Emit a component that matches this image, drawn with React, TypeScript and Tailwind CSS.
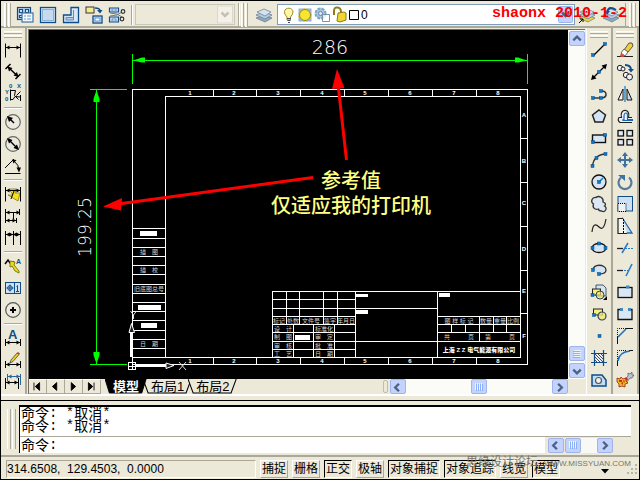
import React from 'react';

const BLUE = '#0f4c8a';
const NODE = '#0878d0';

type Tool = { name: string; art: React.ReactNode };

const Node = ({ x, y }: { x: number; y: number }) => (
  <rect x={x - 1.5} y={y - 1.5} width="3" height="3" fill={NODE} stroke="#064a86" strokeWidth="0.5" />
);

// Horizontal dimension line with arrow heads at both ends
const DimLine = ({ y, x1 = 1, x2 = 15, color = '#000' }: { y: number; x1?: number; x2?: number; color?: string }) => (
  <g fill={color} stroke={color}>
    <path d={`M${x1} ${y}H${x2}`} />
    <path d={`M${x1} ${y}l3.5 -2v4zM${x2} ${y}l-3.5 -2v4z`} stroke="none" />
  </g>
);

const dimensionTools: Tool[][] = [
  [
    { name: '线性标注', art: <><path d="M.5 1.500v14M15.500 1.500v14" stroke="#000" /><DimLine y={5.5} /></> },
    {
      name: '对齐标注',
      art: (
        <g stroke="#000" fill="#000">
          <path d="M3 3l10 9.500M.5 5l5-5M10.500 15l5-5" strokeWidth="1.500" />
          <path d="M2.500 2.500l5 1.500-3.500 3.500zM13.500 13l-5-1.500L12 8z" stroke="none" />
        </g>
      ),
    },
    {
      name: '坐标标注',
      art: (
        <g stroke="#000" fill="none">
          <path d="M5.500 3.500v11M5.500 4.500h5l-1 5 4 4M5 13.500h3l2-3 5 .5M11.500 9.500l4-4M15.500 9v6" />
          <g fill={BLUE} stroke="none" fontSize="6" fontWeight="700" fontFamily="Liberation Sans, sans-serif">
            <text x="4" y="2">0</text><text x="12" y="2">X</text><text x="0" y="8">Y</text><text x="0" y="15">0</text>
          </g>
        </g>
      ),
    },
  ],
  [
    {
      name: '半径标注',
      art: <><circle cx="8" cy="8" r="7.3" fill="#eceadf" stroke="#666" strokeWidth="1.200" /><path d="M9 9L4 4" stroke="#000" strokeWidth="1.500" /><path d="M2 2l6 2-4 4z" /></>,
    },
    {
      name: '直径标注',
      art: <><circle cx="8" cy="8" r="7.3" fill="#eceadf" stroke="#666" strokeWidth="1.200" /><path d="M4 4l8 8" stroke="#000" strokeWidth="1.500" /><path d="M2 2l5.500 2-3.500 3.500zM14 14l-5.500-2L12 8.500z" /></>,
    },
    {
      name: '角度标注',
      art: <><path d="M0 15.500h15.500M0 10L9 1" stroke="#000" /><path d="M9 3q5 4 5 9" stroke="#000" fill="none" /><path d="M7 1.500l4.500 .5-3 3.500zM14 14.500l-2.500-5h4.500z" /></>,
    },
  ],
  [
    {
      name: '快速标注',
      art: <><path d="M4 3h7l-1 4h5l-2 8-10-6h5z" fill="#f6df1c" stroke="#7a6d00" strokeWidth="0.700" /><path d="M.5 1v14.500M15.500 1v14.500M9 5l-3 8" stroke="#000" /><DimLine y={4.5} /></>,
    },
    {
      name: '基线标注',
      art: <><path d="M.5 1v14M11.500 10v5M14.500 1v6" stroke="#000" /><DimLine y={4.5} x2={15} /><DimLine y={12.5} x2={11} /><path d="M8.500 4v7" stroke="#000" /></>,
    },
    {
      name: '连续标注',
      art: <><path d="M.5 1v14M8.500 1v14M15.500 1v14" stroke="#000" /><DimLine y={4.5} x2={8} /><DimLine y={4.5} x1={8} /></>,
    },
  ],
  [
    {
      name: '快速引线',
      art: <><path d="M0 6l3-4 2 3 4-1" stroke="#000" strokeWidth="1.500" fill="none" /><path d="M5 3l5 1-1 3 5 6v2l-4-2-3-5-2 1z" fill="#e8dc20" stroke="#6b6200" strokeWidth="0.800" /><text x="11" y="6" fontSize="7" fontWeight="700" fill={BLUE} fontFamily="Liberation Sans, sans-serif">A</text></>,
    },
    {
      name: '公差',
      art: <><rect x=".5" y="2.500" width="15" height="11" fill="#d3e1f1" stroke={BLUE} /><path d="M9.500 3v10" stroke={BLUE} /><circle cx="5" cy="8" r="2.300" fill="none" stroke={BLUE} /><path d="M1.500 8h7M5 4.500v7M11.500 6.500l1-1v6M11 11.500h3" stroke={BLUE} fill="none" /></>,
    },
    {
      name: '圆心标记',
      art: <><circle cx="8" cy="8" r="7.3" fill="#eceadf" stroke="#555" strokeWidth="1.200" /><path d="M8 5v6M5 8h6" stroke="#000" strokeWidth="2" /></>,
    },
  ],
  [
    {
      name: '编辑标注',
      art: <><text x="3" y="9" fontSize="13" fontWeight="700" fill={BLUE} fontFamily="Liberation Sans, sans-serif">A</text><path d="M.5 9v7M15.500 9v7" stroke="#000" /><DimLine y={12.5} /></>,
    },
    {
      name: '编辑标注文字',
      art: <><path d="M.5 9v7M15.500 9v7" stroke="#000" /><DimLine y={12.5} /><path d="M5 11l1-3 6-7 2 1.500-6 7z" fill="#e8cf2a" stroke="#333" strokeWidth="0.700" /><path d="M12 1l1-1 2 1.500-1 1z" fill="#d03030" /></>,
    },
    {
      name: '标注更新',
      art: <><path d="M2.500 0v7M15.500 0v11" stroke="#2c6496" /><DimLine y={2.5} x1={3} color="#2c6496" /><path d="M.5 4v11M13.500 4v11" stroke="#000" /><DimLine y={8.5} x2={13} /></>,
    },
  ],
];

const drawTools: Tool[] = [
  { name: '直线', art: <><path d="M2 14L14 2" stroke="#000" strokeWidth="1.200" /><Node x={2} y={13} /><Node x={14} y={2} /></> },
  { name: '构造线', art: <><path d="M2 14L14 2" stroke="#000" strokeWidth="1.200" /><path d="M0 16l1.500-5.500 4 4zM16 0l-5.500 1.500 4 4z" /><Node x={8} y={8} /></> },
  { name: '多段线', art: <><path d="M2 12h9c6-1 5-8-1-7" stroke="#333" strokeWidth="1.500" fill="none" /><Node x={2} y={12} /><Node x={10} y={12} /><Node x={10} y={5} /></> },
  { name: '正多边形', art: <path d="M8 2l6.500 5-2.500 7H4L1.500 7z" fill="#d5e4f4" stroke="#222" strokeWidth="1.500" /> },
  { name: '矩形', art: <><rect x="1.500" y="5" width="13" height="7.500" fill="#d9e6f4" stroke="#111" strokeWidth="1.400" /><Node x={2} y={12} /><Node x={14} y={5} /></> },
  { name: '圆弧', art: <><path d="M1.500 14C2 8 6 2 15 2" stroke="#333" strokeWidth="1.300" fill="none" /><Node x={1.5} y={14} /><Node x={5.5} y={6} /><Node x={14.5} y={2} /></> },
  { name: '圆', art: <><circle cx="8" cy="8" r="7" fill="#d7e4f4" stroke="#111" strokeWidth="1.300" /><path d="M8 8l4-4" stroke={NODE} strokeWidth="1.500" /><Node x={8} y={8} /></> },
  { name: '修订云线', art: <path d="M2.500 8C-1 6 1 1 5 1.500 8-1 13 2 12 6c3 1 3 3 1.500 4C17 12 14 17 10.500 15c-2 0-3-1-3-2C4 14 1 12 2.500 8z" fill="#dce7f4" stroke="#333" strokeWidth="1.300" /> },
  { name: '样条曲线', art: <path d="M1 14C2 5 5 6 8 9c4 4 6-2 7-8" stroke="#222" strokeWidth="1.200" fill="none" /> },
  { name: '椭圆', art: <><ellipse cx="8" cy="8" rx="7" ry="4.500" fill="#d5e4f4" stroke="#111" strokeWidth="1.300" /><Node x={1.5} y={8} /><Node x={14.5} y={8} /><Node x={8} y={3.5} /></> },
  { name: '椭圆弧', art: <><path d="M2 9C1 1 15 2 15 8c0 3-3 4-7 4" fill="#d5e4f4" stroke="#333" strokeWidth="1.300" /><Node x={2} y={8} /><Node x={8} y={12} /></> },
  {
    name: '插入块',
    art: <><path d="M5 1h7l3 3v8H5z" fill="#d5e4f4" stroke="#234" strokeWidth=".8" /><rect x="1.500" y="5" width="8" height="6" fill="#f5ed85" stroke="#222" /><circle cx="9" cy="11" r="4" fill="#f0e675" fillOpacity=".7" stroke="#345" /><Node x={1.5} y={11} /><path d="M16 12v4h-4z" /></>,
  },
  { name: '创建块', art: <><rect x="2.500" y="3" width="9" height="6" fill="#f5ed85" stroke="#222" /><circle cx="11" cy="10" r="4" fill="#f0e675" fillOpacity=".8" stroke="#345" strokeWidth="1.200" /><Node x={3} y={9} /></> },
  { name: '点', art: <Node x={8.5} y={8} /> },
  { name: '图案填充', art: <><rect x="3.500" y="3.500" width="9" height="9" fill="#e8eff8" /><path d="M4 4l8 8M7 4l5 5M10 4l2 2M4 7l5 5M4 10l2 2" stroke="#222" strokeWidth=".8" /><path d="M3.500 0v16M12.500 0v16M0 3.500h16M0 12.500h16" stroke={BLUE} strokeWidth="1.200" /></> },
  { name: '面域', art: <><path d="M1 3h10l4 5v6H1z" fill="#c5dcf1" stroke={BLUE} strokeWidth="1.500" /><circle cx="7.500" cy="8.500" r="3" fill="#edf3fa" stroke="#555" strokeWidth="1.200" /></> },
];

const modifyTools: Tool[] = [
  { name: '删除', art: <><path d="M0 14.500h16" stroke="#222" /><path d="M7 8l5-7h3l1 3-5 6z" fill="#f1cf36" stroke="#333" strokeWidth=".8" /><path d="M4 11l3-4 4 3-3 4z" fill="#fff" stroke="#445" strokeWidth=".8" /><path d="M4 11l4 3q-3 2-5 0z" fill="#d64c3a" /></> },
  { name: '复制', art: <><path d="M8 1q6 0 6 5" stroke={BLUE} strokeWidth="2" fill="none" /><path d="M11 5h6l-3 3.500z" fill={BLUE} /><g fill="#eef2f8" stroke="#222"><circle cx="3" cy="4" r="2.700" /><circle cx="6" cy="5" r="2" /><circle cx="9" cy="11" r="2.700" /><circle cx="12.500" cy="13" r="3" /></g></> },
  { name: '镜像', art: <><path d="M6 3v11H1z" fill="#f6f6f2" stroke="#111" /><path d="M10 3v11h5z" fill="#c9dcee" stroke="#111" /><path d="M8 0v16" stroke={NODE} strokeWidth="1.200" /></> },
  { name: '偏移', art: <><path d="M15 14.500H3q-3-2-1-5h2.500C2 0 14 0 11.500 9.500H15" fill="#edf3fa" stroke="#222" strokeWidth="1.200" /><path d="M16 12.500H6q-1-1 1-1V8c0-4 4-4 3.500 0v3.500H16" fill="none" stroke="#1b67b5" strokeWidth="1.200" /></> },
  { name: '阵列', art: <g fill="#e1ebf5" stroke="#111" strokeWidth="1.300"><rect x="1" y=".5" width="5.500" height="5.500" /><rect x="10" y=".5" width="5.500" height="5.500" /><rect x="1" y="9.500" width="5.500" height="5.500" /><rect x="10" y="9.500" width="5.500" height="5.500" /></g> },
  { name: '移动', art: <><path d="M8 2v12M2 8h12" stroke="#41719c" strokeWidth="2" /><path d="M8 0l3 4H5zM8 16l3-4H5zM0 8l4-3v6zM16 8l-4-3v6z" fill="#41719c" /></> },
  { name: '旋转', art: <><path d="M4 3.500a6.500 6.500 0 1 0 8 0" fill="none" stroke="#557a9c" strokeWidth="2.200" /><path d="M1 1h7v6z" fill="#41719c" /></> },
  { name: '缩放', art: <><rect x="1" y=".5" width="14.500" height="14.500" fill="#cfe0f2" stroke={BLUE} /><rect x="1" y="7.500" width="8" height="8" fill="#edf2f7" stroke="#000" strokeDasharray="1 1" /></> },
  { name: '拉伸', art: <><path d="M6 1l9 14H6z" fill="#c9dcee" stroke="#2467a8" strokeWidth="1.300" /><path d="M6 .5H1v15h9" fill="#f4f4ee" stroke="#222" strokeWidth="1.200" /><path d="M6.500 1v14" stroke="#000" strokeDasharray="2 1" /></> },
  { name: '修剪', art: <><path d="M0 8.500h6" stroke="#222" strokeWidth="1.300" /><path d="M5 13l6-10" stroke="#2479cc" strokeWidth="1.500" /><path d="M8 8.500h8" stroke="#2479cc" strokeDasharray="2 1" /></> },
  { name: '延伸', art: <><path d="M0 8.500h6" stroke="#222" strokeWidth="1.300" /><path d="M7 8.500h4" stroke="#2479cc" strokeDasharray="2 1" /><path d="M9 14l6-12" stroke="#2479cc" strokeWidth="1.500" /></> },
  { name: '打断于点', art: <><rect x="1" y="3.500" width="14" height="10" fill="#d9e6f3" stroke="#111" strokeWidth="1.300" /><rect x="9" y="1.500" width="3.500" height="3" fill="#4688c4" /></> },
  { name: '打断', art: <><path d="M4 3.500H1v10h14v-10h-3" fill="#d9e6f3" stroke="#111" strokeWidth="1.300" /><rect x="3" y="2" width="3" height="3" fill="#4688c4" /><rect x="11" y="2" width="3" height="3" fill="#4688c4" /></> },
  { name: '倒角', art: <><path d="M.5 9V.5h9" fill="none" stroke="#111" strokeDasharray="1 1" /><path d="M.5 16V9M9 .5h7" stroke="#111" /><path d="M1 9l8-8" stroke="#1c6fc4" strokeWidth="1.600" /></> },
  { name: '圆角', art: <><path d="M.5 9V.5h9" fill="none" stroke="#111" strokeDasharray="1 1" /><path d="M.5 16v-6M12 .5h4" stroke="#111" /><path d="M1 11Q2 2 13 1" fill="none" stroke="#1c6fc4" strokeWidth="1.600" /></> },
  { name: '分解', art: <><path d="M7 9l4-5 0-3 2 1 2-2 0 3 2 0-2 3-2 0-4 5z" fill="#b9c8d8" stroke="#555" strokeWidth=".7" /><path d="M0 6l3 1 1-2 2 2 3-1 0 3 2 2-3 1 0 3-3-1-3 1 0-3-2-2z" fill="#e9bc1d" stroke="#9c2010" strokeWidth=".8" /><path d="M2 8h3v2H2zM6 8l2 1-1 2zM4 11l2-1v3zM9 5l2 2-1 2-2-2z" fill="#d4281c" /></> },
];

const ToolButton = ({ tool }: { tool: Tool }) => (
  <button type="button" aria-label={tool.name} className="flex h-[22px] w-6 shrink-0 items-center justify-center">
    <svg width="16" height="16" viewBox="0 0 16 16" fill="#000" className="overflow-visible">
      {tool.art}
    </svg>
  </button>
);

const Gripper = ({ vertical = false }: { vertical?: boolean }) => (
  <div className={vertical ? 'flex h-6 shrink-0 gap-px' : 'mx-[3px] flex shrink-0 flex-col gap-px'}>
    {[0, 1].map((i) => (
      <div
        key={i}
        className={
          vertical
            ? 'w-[3px] border-r border-l border-r-[#aca899] border-l-white bg-[#f5f3ea]'
            : 'h-[3px] border-t border-b border-t-white border-b-[#aca899] bg-[#f5f3ea]'
        }
      />
    ))}
  </div>
);

const SideToolbar = ({ groups, label }: { groups: Tool[][]; label: string }) => (
  <div role="toolbar" aria-label={label} className="flex w-[26px] shrink-0 flex-col border-r-2 border-[#aca899] pt-[3px]">
    <Gripper />
    <div className="h-px shrink-0" />
    {groups.map((group, i) => (
      <React.Fragment key={i}>
        {i > 0 && (
          <div className="flex h-1.5 shrink-0 items-center px-[3px]">
            <div className="h-0.5 w-full border-t border-[#aca899] bg-white" />
          </div>
        )}
        {group.map((tool) => <ToolButton key={tool.name} tool={tool} />)}
      </React.Fragment>
    ))}
  </div>
);

const arrows = {
  up: 'M4 9l4-4 4 4',
  down: 'M4 6l4 4 4-4',
  left: 'M9 4L5 8l4 4',
  right: 'M6 4l4 4-4 4',
};

const ScrollButton = ({ dir, label }: { dir: keyof typeof arrows; label: string }) => (
  <button
    type="button"
    aria-label={label}
    className="flex h-[15px] w-4 shrink-0 items-center justify-center rounded-xs border border-[#9db5ea] bg-[#c3d3fd]"
  >
    <svg width="14" height="14" viewBox="1 0 14 15" fill="none" stroke="#4d6185" strokeWidth="2.500">
      <path d={arrows[dir]} />
    </svg>
  </button>
);

const Thumb = ({ vertical = false }: { vertical?: boolean }) => (
  <button
    type="button"
    aria-label="滚动滑块"
    className="flex h-[15px] w-4 shrink-0 items-center justify-center rounded-xs border border-[#9db5ea] bg-[#c3d3fd]"
  >
    <svg width="8" height="8" viewBox="0 0 8 8" className={vertical ? 'rotate-90' : ''} shapeRendering="crispEdges">
      <path d="M.5 0v7M2.500 0v7M4.500 0v7M6.500 0v7" stroke="#eef4fe" />
      <path d="M1.500 1v7M3.500 1v7M5.500 1v7M7.500 1v7" stroke="#8cb0f8" />
    </svg>
  </button>
);

// Stack of three sheets, used by every layer button
const LayerStack = ({ bottom = '#8fa9bf' }: { bottom?: string }) => (
  <g stroke="#5d7893" strokeWidth=".7">
    <path d="M0 11l8-3 8 3-7 4z" fill={bottom} />
    <path d="M0 8l8-3 8 3-7 4z" fill="#b7cbdc" />
    <path d="M1 5l7-3 7 3-6 4z" fill="#d6e3ee" />
  </g>
);

const viewportTools: Tool[] = [
  {
    name: '显示视口对话框',
    art: <g stroke={BLUE} strokeWidth="1.200"><rect x=".5" y=".5" width="13" height="12" fill="#bcd3ea" /><path d="M2.500 2.500h3v3h-3zM8.500 2.500h3v3h-3zM2.500 8.500h3v2h-3z" fill="#e8f0f8" /><rect x="5" y="6" width="11" height="9" fill="#f4f8fc" stroke="#3b76ae" /><path d="M7 9h2M10 9h4M7 12h2M10 12h4" stroke="#6c9bc8" /></g>,
  },
  { name: '单个视口', art: <><rect x=".5" y=".5" width="15" height="15" fill="#d9e6f4" stroke={BLUE} strokeWidth="1.300" /><rect x="2.500" y="2.500" width="11" height="11" fill="#c6dbf0" stroke="#8db2d6" /></> },
  { name: '多边形视口', art: <><path d="M8 .5h7.500v15H.5V8H8z" fill="#d9e6f4" stroke={BLUE} strokeWidth="1.300" /><path d="M10.500 3v10H3v-2.500h7.500z" fill="#afcbe8" stroke="#5b8fc2" /></> },
  { name: '将对象转换为视口', art: <><rect x="0" y="0" width="8" height="6" fill="#f6ec8c" stroke="#334" /><path d="M9 1q5 0 5 3" stroke={BLUE} strokeWidth="1.500" fill="none" /><path d="M11 3h5.500l-2.500 3.500z" fill={BLUE} /><rect x="7" y="9" width="9" height="7" fill="#d9e6f4" stroke={BLUE} strokeWidth="1.300" /><rect x="9" y="11" width="5" height="3" fill="#fff" stroke="#5b8fc2" /></> },
  { name: '裁剪现有视口', art: <><path d="M.5 1h9v4h-9zM.5 10h9v5h-9z" fill="#d0e1f2" stroke={BLUE} strokeWidth="1.200" /><path d="M3 12h4v2H3zM3 2h4v2H3z" fill="#fff" stroke="#5b8fc2" /><path d="M1 6l7 1 5 3M1 9l7-1 5-3" stroke="#777" fill="none" /><circle cx="14" cy="4.500" r="1.800" fill="none" stroke="#333" strokeWidth="1.200" /><circle cx="13" cy="12" r="1.800" fill="none" stroke="#333" strokeWidth="1.200" /></> },
];

const TopBar = () => (
  <header className="relative flex h-[27px] shrink-0 items-center border-b-2 border-[#aca899] pt-0.5 pl-[3px]">
    <Gripper vertical />
    <div className="flex -space-x-px px-0.5">
      {viewportTools.map((tool) => <ToolButton key={tool.name} tool={tool} />)}
    </div>
    <div className="mr-0.5 h-5 w-0.5 border-l border-[#aca899] bg-white" />
    <div className="relative flex h-[21px] w-[100px] border border-[#c9c7ba] bg-[#ece9d8]">
      <select aria-label="视口比例" disabled className="w-full appearance-none" />
      <svg viewBox="0 0 16 18" className="pointer-events-none absolute right-px h-[19px] w-4 bg-[#f3f1e8]">
        <rect x=".5" y=".5" width="15" height="17" fill="none" stroke="#dbd8cb" />
        <path d="M4.500 7L8 10.500 11.500 7" fill="none" stroke="#c5c2b4" strokeWidth="2.500" />
      </svg>
    </div>
    <div className="mr-px ml-[3px] h-full w-0.5 border-l border-[#aca899] bg-white" />
    <Gripper vertical />
    <div className="w-1" />
    <ToolButton tool={{ name: '图层特性管理器', art: <LayerStack /> }} />
    <div className="relative ml-px flex h-[21px] flex-1 items-center border border-[#7f9db9] bg-white">
      <select aria-label="图层" className="h-full w-full appearance-none bg-white pl-[83px] font-['Liberation_Sans',sans-serif] text-xs leading-none">
        <option>0</option>
      </select>
      <svg width="80" height="18" viewBox="0 0 80 18" className="pointer-events-none absolute left-0.5">
        <path d="M7 11Q4 8 4.500 5.500C5 1 13 1 13 6q0 2-2.500 5v3H7z" fill="#fff9a5" stroke="#a08b2a" />
        <path d="M7 12.500h4M7.500 14.500h3M8 16.500h2" stroke="#445" />
        <path d="M18.500 2.500h13v13h-13z" fill="#8ab1ec" />
        <circle cx="25" cy="9" r="5.500" fill="#f8e52d" stroke="#a28a16" />
        <circle cx="25" cy="9" r="6.500" fill="none" stroke="#e5ca27" strokeDasharray="1.500 2" />
        <circle cx="40.500" cy="7.500" r="5" fill="#a9c6df" stroke="#7fa3c2" strokeWidth="2" strokeDasharray="3 1" />
        <circle cx="40.500" cy="7.500" r="2" fill="#dce9f3" stroke="#6089ad" />
        <path d="M42.500 8.500h7v7h-7z" fill="#fff" fillOpacity=".7" stroke="#7892aa" />
        <path d="M54 9V5q0-4 3.500-3.500Q61 2 61 6v3" fill="none" stroke="#8f7c18" strokeWidth="2" />
        <path d="M58 7l6-1 2 1v7l-6 2-3-1z" fill="#f0d62d" stroke="#8f7c18" />
        <path d="M69.500 4.500h9v9h-9z" fill="#fff" stroke="#000" />
      </svg>
      <svg width="15" height="17" viewBox="0 0 15 17" className="pointer-events-none absolute right-px">
        <rect x=".5" y=".5" width="14" height="16" rx="1" fill="#c3d3fd" stroke="#9db5ea" />
        <path d="M4 6.500l3.500 3.500L11 6.500" fill="none" stroke="#4d6185" strokeWidth="2.500" />
      </svg>
    </div>
    <div className="flex w-[50px]">
      <ToolButton tool={{ name: '将对象的图层置为当前', art: <><LayerStack bottom="#f1d72f" /><path d="M0 16l4-4M1 12h3v3" stroke="#000" fill="none" /></> }} />
      <ToolButton tool={{ name: '上一个图层', art: <><LayerStack /><path d="M13 3Q6-2 4 5" fill="none" stroke={BLUE} strokeWidth="2" /><path d="M1 4h6L4 8z" fill={BLUE} /></> }} />
    </div>
    <div className="mr-[3px] h-full w-px bg-[#aca899]" />
    <Gripper vertical />
    <div className="w-[3px]" />
    <p className="absolute top-1 right-3 font-['Liberation_Mono',monospace] text-[15px] leading-[18px] font-bold whitespace-pre text-[#f80000]">
      shaonx 2010-1-2
    </p>
  </header>
);

const columnMarks = [213, 256, 300, 344, 388, 432, 476];
const columnLabels = [190, 234, 278, 322, 365, 410, 454, 498];
const rowMarks = [138, 182, 226, 270, 313];
const rowLabels: [string, number][] = [['A', 115], ['B', 161], ['C', 203], ['D', 249], ['E', 291], ['F', 336]];
const stubLines = [228, 238, 247, 256, 265, 274, 284, 293, 302, 311, 320, 330, 339, 348];

// [text, x, baseline] of the title block and of the strip on the left
const sheetTexts: [string, number, number][] = [
  ['描　图', 149, 254], ['描　校', 149, 272], ['旧底图总号', 149, 291], ['日　期', 149, 346],
  ['标记', 279, 323], ['处数', 293, 323], ['文件号', 311, 323], ['签字', 330, 323], ['年月日', 346, 323],
  ['设　计', 283, 331], ['标准化', 324, 331], ['制　图', 283, 339], ['审　定', 324, 339],
  ['审　核', 283, 348], ['批　准', 324, 348], ['工　艺', 283, 356], ['日　期', 324, 356],
  ['图 样 标 记', 459, 323], ['数量', 486, 323], ['重量', 500, 323], ['比例', 513, 323],
  ['共　　　页', 459, 339], ['第　　　页', 500, 339],
];

const Drawing = () => (
  <svg
    viewBox="29 30 539 348"
    role="img"
    aria-label="图纸"
    preserveAspectRatio="xMinYMin meet"
    className="block min-h-0 w-full flex-1 bg-black font-['Liberation_Sans','Noto_Sans_CJK_SC',sans-serif]"
  >
    <g fill="none" stroke="#fff" shapeRendering="crispEdges">
      <path d="M132.500 89.500h395v275h-395zM165.500 357.500v-261h355v261M132.500 357.500h388" />
      {columnMarks.map((x) => <path key={x} d={`M${x + 0.5} 89v8M${x + 0.5} 357v8`} />)}
      {rowMarks.map((y) => <path key={y} d={`M520 ${y + 0.5}h8`} />)}
      {stubLines.map((y) => <path key={y} d={`M132 ${y + 0.5}h33`} />)}
      <path d="M272.500 357v-65.500h248M355.500 291v66M437.500 291v66" />
      <path d="M272 299.500h83M272 308.500h165M272 316.500h83M272 324.500h83M272 332.500h83M272 341.500h248M272 349.500h83" />
      <path d="M286.500 291v33M299.500 291v33M323.500 291v33M337.500 291v33M293.500 324v33M313.500 324v33M334.500 324v33" />
      <path d="M437 316.500h83M437 324.500h83M437 332.500h83M479.500 316v25M493.500 316v16M506.500 316v16M451.500 324v8M465.500 324v8" />
    </g>
    <path
      fill="#fff"
      shapeRendering="crispEdges"
      d="M140 231h17v5h-17zM138 305h23v5h-23zM141 323h16v5h-16zM356 294h12v3h-12zM356 310h12v4h-12zM439 293h11v4h-11zM295 335h15v5h-15z"
    />

    <g fill="#fff" fontSize="6" fontWeight="700" textAnchor="middle">
      {columnLabels.map((x, i) => (
        <React.Fragment key={x}>
          <text x={x} y="95">{i + 1}</text>
          <text x={x} y="363">{i + 1}</text>
        </React.Fragment>
      ))}
      {rowLabels.map(([label, y]) => <text key={label} x="524" y={y + 2}>{label}</text>)}
    </g>
    <g fill="#d4d4d4" fontSize="6" textAnchor="middle" className="whitespace-pre">
      {sheetTexts.map(([text, x, y]) => <text key={`${x}-${y}`} x={x} y={y}>{text}</text>)}
    </g>
    <text x="479" y="352" fill="#fff" fontSize="6" fontWeight="900" textAnchor="middle">上海 Z Z 电气能源有限公司</text>

    {/* dimensions */}
    <g stroke="#0f0" fill="none" shapeRendering="crispEdges">
      <path d="M132.500 54v30M527.500 54v30M132 60.500h395M90 89.500h37M90 364.500h37M96.500 89v275" />
    </g>
    <path fill="#0f0" d="M133 60.500l9-3h3v5h-3zM527 60.500l-9-3h-3v5h3zM96.500 90l-3 9v3h6v-3zM96.500 364l-3-9v-3h6v3z" />
    <g fill="#fff" textAnchor="middle" fontFamily="DejaVu Sans, sans-serif" fontWeight="200">
      <text x="330" y="54" fontSize="19">286</text>
      <text transform="translate(91 227) rotate(-90)" fontSize="17">199.25</text>
    </g>

    {/* UCS icon */}
    <g stroke="#fff" fill="none" shapeRendering="crispEdges">
      <path d="M128.500 362.500h7v7h-7zM128 366h40M132 369v-38" />
      <path d="M131 357v-25M136 365h30" strokeWidth="2" />
    </g>
    <path d="M129 332.500l2.500-9 3 9zM166 363l8 2.500-8 3z" fill="#222" stroke="#fff" />
    <path d="M130.500 311l3 4 3-4M133.500 315v4M179 362l7 8M186 362l-7 8" stroke="#ddd" fill="none" />

    {/* callout */}
    <path d="M313 177.500L118 204M346.500 160L338 84" stroke="#f00" strokeWidth="3" />
    <path d="M103 206.500l19-8.500-1 12.500zM337 69l-5 20 12.500-1z" fill="#f00" />
    <g fill="#ffff80" fontSize="20" fontWeight="500" textAnchor="middle">
      <text x="351" y="188">参考值</text>
      <text x="351" y="213">仅适应我的打印机</text>
    </g>
  </svg>
);

const navButtons = [
  { name: '第一个布局', d: 'M4.500 3v9M11 3v9L6 7.500z' },
  { name: '上一个布局', d: 'M10 3v9L5 7.500z' },
  { name: '下一个布局', d: 'M6 3v9l5-4.500z' },
  { name: '最后一个布局', d: 'M5 3v9l5-4.500zM11.500 3v9' },
];

const LayoutTab = ({ label, active = false }: { label: string; active?: boolean }) => (
  <button
    type="button"
    className={`relative -ml-1 h-[15px] px-2 text-[13px] leading-[14px] first:ml-0 ${active ? 'z-10 font-bold text-white' : 'text-black'}`}
  >
    <svg viewBox="0 0 48 15" preserveAspectRatio="none" className="absolute inset-0 h-full w-full">
      <path d="M0 0l5 14h37l5-14" fill={active ? '#000' : '#ece9d8'} stroke="#000" />
    </svg>
    <span className="relative">{label}</span>
  </button>
);

const LayoutBar = () => (
  <div className="flex h-[15px] shrink-0 items-center">
    {navButtons.map((b) => (
      <button key={b.name} type="button" aria-label={b.name} className="h-[15px] w-[18px] border-t border-r border-b border-[#aca899] border-t-white">
        <svg width="16" height="13" viewBox="0 0 16 15" stroke="#000"><path d={b.d} /></svg>
      </button>
    ))}
    <nav aria-label="布局" className="ml-1 flex">
      <LayoutTab label="模型" active />
      <LayoutTab label="布局1" />
      <LayoutTab label="布局2" />
    </nav>
    <div className="flex-1" />
    <div className="mr-0.5 h-[13px] w-[5px] rounded-xs border border-[#c0bdae]" />
    <div className="flex w-[32%] items-center justify-between bg-[#fbfbf8]">
      <ScrollButton dir="left" label="向左滚动" />
      <Thumb />
      <ScrollButton dir="right" label="向右滚动" />
    </div>
    <div className="w-[17px]" />
  </div>
);

const Prompt = ({ children }: { children?: React.ReactNode }) => (
  <span className="flex h-[13px] items-center whitespace-pre">
    命令<span className="font-['Liberation_Mono',monospace]">: {children && '*'}</span>
    {children}
    {children && <span className="font-['Liberation_Mono',monospace]">*</span>}
  </span>
);

const CommandWindow = () => (
  <section aria-label="命令行" className="flex shrink-0 border-t border-black pt-1 pr-2 pb-0.5 pl-1.5">
    <div className="flex w-3 py-1">
      <div className="flex h-10 gap-px">
        <div className="w-1 border-r border-l border-r-[#aca899] border-l-white" />
        <div className="w-1 border-r border-l border-r-[#aca899] border-l-white" />
      </div>
    </div>
    <div className="flex-1 border-t-2 border-l border-black bg-white text-sm leading-[13px]">
      <div className="flex flex-col border-b border-[#aca899] pb-[3px] pl-px">
        <Prompt>取消</Prompt>
        <Prompt>取消</Prompt>
      </div>
      <div className="flex h-4 items-center pl-px">
        <label htmlFor="command"><Prompt /></label>
        <input id="command" type="text" className="h-full min-w-0 flex-1 pl-1 outline-none" />
        <div className="flex h-full items-center bg-[#ece9d8] pr-[18px] pl-[3px]">
          <ScrollButton dir="left" label="命令行向左滚动" />
          <div className="ml-px flex w-8 bg-[#f8f8f4]"><Thumb /></div>
          <ScrollButton dir="right" label="命令行向右滚动" />
        </div>
      </div>
    </div>
  </section>
);

const modes = [
  { label: '捕捉', on: false },
  { label: '栅格', on: false },
  { label: '正交', on: true },
  { label: '极轴', on: false },
  { label: '对象捕捉', on: true },
  { label: '对象追踪', on: true },
  { label: '线宽', on: false },
  { label: '模型', on: true },
];

const StatusBar = () => (
  <footer className="relative flex h-6 shrink-0 items-center gap-1 border-t-2 border-[#aca899] pt-0.5 pl-[5px]">
    <div className="h-[18px] flex-1 border border-[#aca899] border-r-white border-b-white font-['Liberation_Sans',sans-serif] text-xs leading-[17px] whitespace-pre">
      314.6508,  129.4503,  0.0000
    </div>
    {modes.map((mode) => (
      <button
        key={mode.label}
        type="button"
        aria-pressed={mode.on}
        className={`h-[18px] shrink-0 border px-px text-xs leading-[17px] ${
          mode.on ? 'border-t-black border-r-white border-b-white border-l-black' : 'border-t-white border-r-[#aca899] border-b-[#aca899] border-l-white'
        }`}
      >
        {mode.label}
      </button>
    ))}
    <div className="flex w-[75px] items-end justify-end gap-4">
      <button type="button" aria-label="状态栏菜单" className="pb-0.5">
        <svg width="8" height="5" viewBox="0 0 8 5"><path d="M0 0h8L4 4.500z" /></svg>
      </button>
      <svg width="14" height="14" viewBox="0 0 14 14" fill="#b8b4a2">
        <path d="M10 2h2v2h-2zM6 6h2v2H6zM10 6h2v2h-2zM2 10h2v2H2zM6 10h2v2H6zM10 10h2v2h-2z" />
      </svg>
    </div>
    <p className="absolute -top-0.5 right-2 flex items-center gap-1.5 leading-3 text-[#77756d]">
      <span className="text-xs leading-3">思缘设计论坛</span>
      <span className="pt-1 font-['Liberation_Sans',sans-serif] text-[8px] leading-[10px]">WWW.MISSYUAN.COM</span>
    </p>
  </footer>
);

const App: React.FC = () => (
  <div className="flex min-h-screen flex-col border border-black bg-[#ece9d8] font-['Liberation_Sans','Noto_Sans_CJK_SC',sans-serif] text-black">
    <TopBar />
    <main className="flex flex-1 border-b-2 border-white">
      <SideToolbar label="标注" groups={dimensionTools} />
      <div className="mt-px ml-px flex min-w-0 flex-1 flex-col border-t border-l border-[#716f64]">
        <div className="flex min-h-0 flex-1">
          <div className="flex min-w-0 flex-1 flex-col">
            <Drawing />
          </div>
          <div className="flex w-[17px] shrink-0 flex-col items-center bg-[#fbfbf8] py-px">
            <ScrollButton dir="up" label="向上滚动" />
            <div className="flex-1" />
            <Thumb vertical />
            <div className="h-0.5" />
            <ScrollButton dir="down" label="向下滚动" />
          </div>
        </div>
        <LayoutBar />
      </div>
      <div className="ml-px w-px bg-white" />
      <SideToolbar label="绘图" groups={[drawTools]} />
      <SideToolbar label="修改" groups={[modifyTools]} />
    </main>
    <div className="h-1 shrink-0" />
    <CommandWindow />
    <StatusBar />
  </div>
);

export default App;
